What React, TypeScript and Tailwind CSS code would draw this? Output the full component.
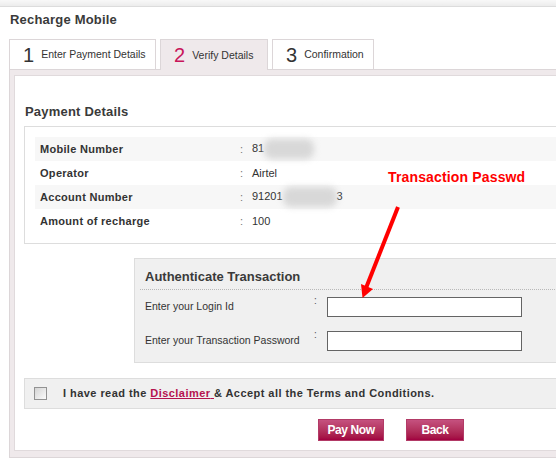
import React from "react";

type Row = { label: string; value: React.ReactNode };

const Blur = ({ w }: { w: string }) => (
	<span className={`inline-block h-[20px] ${w} rounded-[8px] bg-[#d8d8d8] blur-[3px] align-middle`} />
);

const ROWS: Row[] = [
	{ label: "Mobile Number", value: <>81<Blur w="w-[50px]" /></> },
	{ label: "Operator", value: "Airtel" },
	{ label: "Account Number", value: <>91201<Blur w="w-[54px]" />3</> },
	{ label: "Amount of recharge", value: "100" },
];

const TABS = [
	{ n: "1", label: "Enter Payment Details", w: "w-[147px]", active: false },
	{ n: "2", label: "Verify Details", w: "w-[108px]", active: true },
	{ n: "3", label: "Confirmation", w: "w-[102px]", active: false },
];

export default function App() {
	return (
		<div className="relative h-[462px] w-[556px] overflow-hidden bg-white font-['Liberation_Sans',Arial,sans-serif] text-[#333]">
			<div className="h-[7px] border-b border-[#dcdcdc] bg-gradient-to-b from-[#f8f8f8] to-[#ececec]" />
			<h1 className="mt-[5px] pl-[10px] text-[13px] font-bold leading-[16px] tracking-[0.2px] text-[#3a3a3a]">
				Recharge Mobile
			</h1>

			{/* wizard tabs */}
			<div className="relative z-10 mt-[11px] -mb-px flex gap-[4px] pl-[9px]">
				{TABS.map((t) => (
					<div
						key={t.n}
						className={
							t.active
								? `flex h-[31px] ${t.w} items-center gap-[7px] border border-b-0 border-[#dcd6d8] bg-[#efe9eb] pl-[13px]`
								: `flex h-[31px] ${t.w} items-center gap-[7px] border border-[#dcd6d8] bg-white pl-[13px]`
						}
					>
						<span className={t.active ? "text-[20px] leading-none text-[#c8155a]" : "text-[20px] leading-none text-[#333]"}>
							{t.n}
						</span>
						<span className="text-[10.5px] leading-none text-[#333]">{t.label}</span>
					</div>
				))}
			</div>

			<div className="ml-[9px] w-[600px] border border-[#dcd6d8] bg-[#efe9eb] pt-[5px] pb-[6px] pl-[4px]">
				<div className="border border-[#e0dadc] bg-white pb-[9px]">
					<h2 className="pt-[27px] mb-[5px] pl-[10px] text-[13px] font-bold leading-[18px] tracking-[0.2px] text-[#3a3a3a]">
						Payment Details
					</h2>

					<div className="ml-[9px] border border-[#dddddd] py-[10px] pl-[10px]">
						{ROWS.map((r, i) => (
							<div
								key={r.label}
								className={i % 2 === 0 ? "flex h-[24px] items-center bg-[#f7f7f7]" : "flex h-[24px] items-center"}
							>
								<span className="w-[205px] pl-[5px] text-[11px] font-bold tracking-[0.3px] text-[#333]">{r.label}</span>
								<span className="w-[12px] text-[11px] text-[#777]">:</span>
								<span className="text-[11px] text-[#333]">{r.value}</span>
							</div>
						))}
					</div>

					<div className="mt-[14px] ml-[119px] border border-[#dddddd] bg-[#f0f0f0] pb-[4px]">
						<div className="mx-[5px] border-b border-dotted border-[#b8b8b8] pt-[9px] pb-[3px] pl-[5px] text-[13px] font-bold leading-[18px] text-[#3a3a3a]">
							Authenticate Transaction
						</div>
						{["Enter your Login Id", "Enter your Transaction Password"].map((l) => (
							<div key={l} className="flex h-[34px] items-center pl-[10px]">
								<span className="w-[169px] text-[10.5px] text-[#333]">{l}</span>
								<span className="w-[13px] self-start pt-[5px] text-[10px] leading-[12px] text-[#555]">:</span>
								<input
									type={l.includes("Password") ? "password" : "text"}
									className="h-[20px] w-[195px] border border-[#646464] bg-white outline-none"
								/>
							</div>
						))}
					</div>

					<div className="mt-[15px] ml-[9px] flex h-[31px] items-center border border-[#dddddd] bg-[#f0f0f0] pl-[9px]">
						<span className="h-[13px] w-[13px] border border-[#929292] bg-gradient-to-br from-[#d4d4d4] to-[#fbfbfb]" />
						<span className="ml-[16px] text-[11px] font-bold tracking-[0.45px] text-[#333]">
							I have read the{" "}
							<a href="#" className="text-[#b5124f] underline">
								Disclaimer{" "}
							</a>
							&amp; Accept all the Terms and Conditions.
						</span>
					</div>

					<div className="mt-[10px] flex gap-[22px] pl-[303px]">
						<button className="h-[22px] w-[66px] border border-[#b23a66] bg-gradient-to-b from-[#c5517f] to-[#a10040] text-[12px] font-bold tracking-[-0.4px] text-white">
							Pay Now
						</button>
						<button className="h-[22px] w-[58px] border border-[#b23a66] bg-gradient-to-b from-[#c5517f] to-[#a10040] text-[12px] font-bold tracking-[-0.4px] text-white">
							Back
						</button>
					</div>
				</div>
			</div>

			{/* annotation drawn over the screenshot */}
			<div className="absolute left-[388px] top-[170px] text-[14px] font-bold leading-none tracking-[0.15px] text-[#ff0000]">
				Transaction Passwd
			</div>
			<svg className="pointer-events-none absolute left-0 top-0" width="556" height="462">
				<line x1="398" y1="207" x2="366" y2="288" stroke="#ff0000" strokeWidth="4" />
				<polygon points="362.5,298 361,284 373,289" fill="#ff0000" />
			</svg>
		</div>
	);
}
